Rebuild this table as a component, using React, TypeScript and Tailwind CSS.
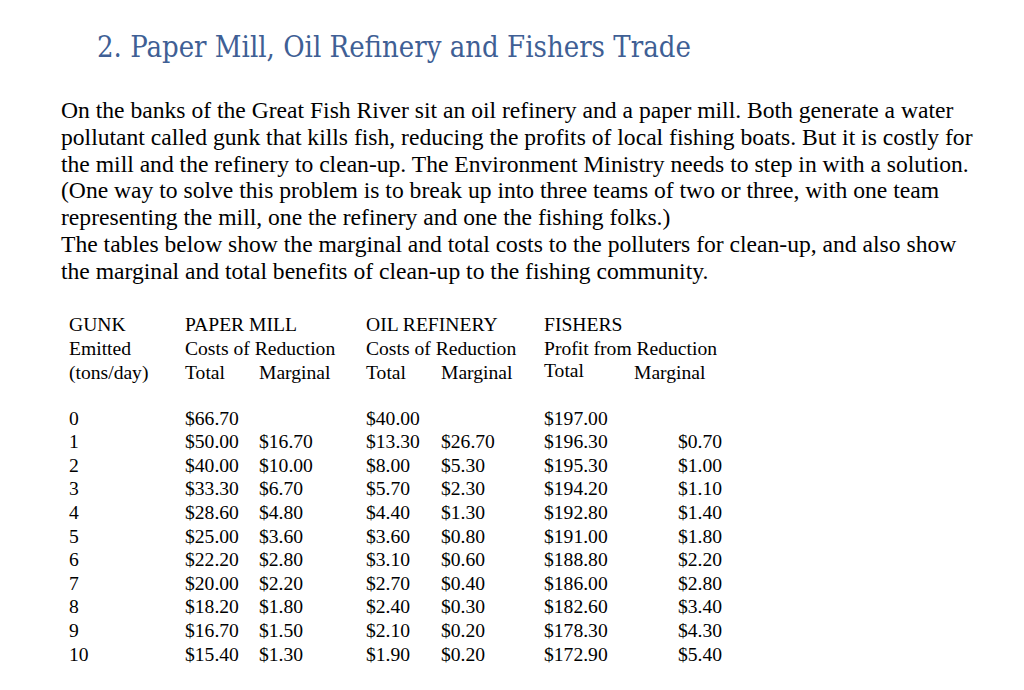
const paperMill = [
  ["$66.70", ""],
  ["$50.00", "$16.70"],
  ["$40.00", "$10.00"],
  ["$33.30", "$6.70"],
  ["$28.60", "$4.80"],
  ["$25.00", "$3.60"],
  ["$22.20", "$2.80"],
  ["$20.00", "$2.20"],
  ["$18.20", "$1.80"],
  ["$16.70", "$1.50"],
  ["$15.40", "$1.30"],
];

const refinery = [
  ["$40.00", ""],
  ["$13.30", "$26.70"],
  ["$8.00", "$5.30"],
  ["$5.70", "$2.30"],
  ["$4.40", "$1.30"],
  ["$3.60", "$0.80"],
  ["$3.10", "$0.60"],
  ["$2.70", "$0.40"],
  ["$2.40", "$0.30"],
  ["$2.10", "$0.20"],
  ["$1.90", "$0.20"],
];

const fishers = [
  ["$197.00", ""],
  ["$196.30", "$0.70"],
  ["$195.30", "$1.00"],
  ["$194.20", "$1.10"],
  ["$192.80", "$1.40"],
  ["$191.00", "$1.80"],
  ["$188.80", "$2.20"],
  ["$186.00", "$2.80"],
  ["$182.60", "$3.40"],
  ["$178.30", "$4.30"],
  ["$172.90", "$5.40"],
];

const cols = "grid grid-cols-[116px_74px_107px_75px_103px_90px_120px]";

export default function App() {
  return (
    <div className="w-[1024px] h-[690px] bg-white overflow-hidden font-['Liberation_Serif',serif] text-black">
      {/* Heading */}
      <h1 className="pl-[97px] pt-[29px] text-[29px] leading-[36px] text-[#3f5f95] font-['DejaVu_Serif_Condensed','Liberation_Serif',serif]">
        2. Paper Mill, Oil Refinery and Fishers Trade
      </h1>

      {/* Intro */}
      <div className="pl-[61px] pt-[32px] text-[23.6px] leading-[26.8px]">
        <p>On the banks of the Great Fish River sit an oil refinery and a paper mill. Both generate a water</p>
        <p>pollutant called gunk that kills fish, reducing the profits of local fishing boats. But it is costly for</p>
        <p>the mill and the refinery to clean-up. The Environment Ministry needs to step in with a solution.</p>
        <p>(One way to solve this problem is to break up into three teams of two or three, with one team</p>
        <p>representing the mill, one the refinery and one the fishing folks.)</p>
        <p>The tables below show the marginal and total costs to the polluters for clean-up, and also show</p>
        <p>the marginal and total benefits of clean-up to the fishing community.</p>
      </div>

      {/* Table */}
      <div className="pl-[69px] pt-[28px] text-[19.6px] leading-[24px]">
        <div className={cols}>
          <div>GUNK</div>
          <div className="col-span-2">PAPER MILL</div>
          <div className="col-span-2">OIL REFINERY</div>
          <div className="col-span-2">FISHERS</div>

          <div>Emitted</div>
          <div className="col-span-2">Costs of Reduction</div>
          <div className="col-span-2">Costs of Reduction</div>
          <div className="col-span-2">Profit from Reduction</div>

          <div>(tons/day)</div>
          <div>Total</div>
          <div>Marginal</div>
          <div>Total</div>
          <div>Marginal</div>
          <div className="-translate-y-[2px]">Total</div>
          <div>Marginal</div>
        </div>

        <div className={`${cols} mt-[22px] leading-[23.6px]`}>
          {paperMill.map((row, i) => (
            <div key={i} className="contents">
              <div>{i}</div>
              <div>{row[0]}</div>
              <div>{row[1]}</div>
              <div>{refinery[i][0]}</div>
              <div>{refinery[i][1]}</div>
              <div>{fishers[i][0]}</div>
              <div className="pl-[44px]">{fishers[i][1]}</div>
            </div>
          ))}
        </div>
      </div>
    </div>
  );
}
